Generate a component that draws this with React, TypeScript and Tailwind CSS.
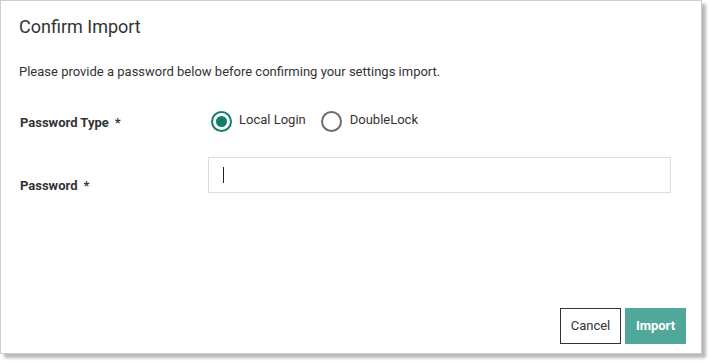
export default function App() {
  return (
    <div className="w-[709px] h-[362px] bg-white" style={{ fontFamily: "Roboto, 'Liberation Sans', sans-serif" }}>
      <div className="w-[702px] h-[354px] border border-[#cdcdcd] bg-white shadow-[4px_4px_3px_rgba(0,0,0,0.28)] flex flex-col">
        <h1 className="pl-[18px] pt-[14px] text-[18px] leading-[24px] text-[#333]">Confirm Import</h1>
        <p className="pl-[18px] mt-[24px] text-[13px] leading-[18px] text-[#333]">
          Please provide a password below before confirming your settings import.
        </p>
        <div className="mt-[29px] flex items-center">
          <div className="w-[208px] pl-[19px] pt-[3px] text-[13px] font-bold text-[#333]">
            Password Type<span className="ml-[6px]">*</span>
          </div>
          <div className="flex items-center text-[13px] text-[#333]">
            <label className="flex items-center gap-[7px] ml-[2px]">
              <span className="w-[21px] h-[21px] rounded-full border-2 border-[#0f7e6b] flex items-center justify-center">
                <span className="w-[11px] h-[11px] rounded-full bg-[#0f7e6b]" />
              </span>
              <span className="-mt-[3px]">Local Login</span>
            </label>
            <label className="flex items-center gap-[8px] ml-[15px]">
              <span className="w-[21px] h-[21px] rounded-full border-2 border-[#6b6b6b]" />
              <span className="-mt-[3px]">DoubleLock</span>
            </label>
          </div>
        </div>
        <div className="mt-[24px] flex items-start">
          <div className="w-[207px] pl-[19px] pt-[19px] text-[13px] font-bold text-[#333]">
            Password<span className="ml-[6px]">*</span>
          </div>
          <div className="w-[463px] h-[36px] border border-[#dedede] flex items-center pl-[14px]">
            <span className="w-px h-[16px] bg-[#222]" />
          </div>
        </div>
        <div className="mt-auto mb-[9px] mr-[15px] flex justify-end gap-[4px]">
          <button className="w-[61px] h-[36px] border border-[#333] text-[13px] text-[#333]">Cancel</button>
          <button className="w-[61px] h-[36px] bg-[#4fa899] text-[13px] font-bold text-white">Import</button>
        </div>
      </div>
    </div>
  );
}
